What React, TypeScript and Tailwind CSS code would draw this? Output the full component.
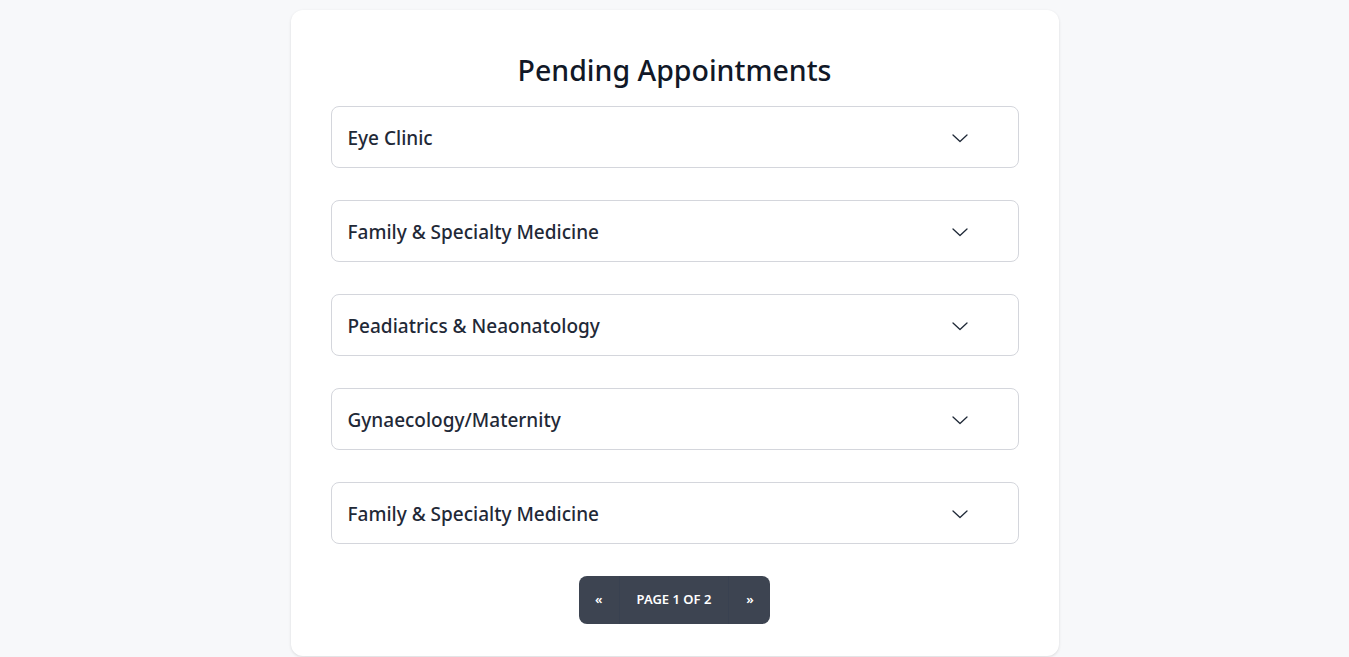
import React from 'react';

const clinics = [
  'Eye Clinic',
  'Family & Specialty Medicine',
  'Peadiatrics & Neaonatology',
  'Gynaecology/Maternity',
  'Family & Specialty Medicine',
];

function Chevron() {
  return (
    <svg width="16" height="16" viewBox="0 0 16 16" fill="none" className="text-[#1f2937]">
      <polyline points="1,5 8,11.5 15,5" stroke="currentColor" strokeWidth="1.3" strokeLinecap="round" strokeLinejoin="round" />
    </svg>
  );
}

export default function App() {
  return (
    <div className="min-h-screen bg-[#f7f8fa] py-2.5 font-['Noto_Sans',sans-serif]">
      <div className="w-[768px] mx-auto bg-white rounded-xl shadow-[0_1px_3px_rgba(0,0,0,0.12)] px-10 pt-[42px] pb-8">
        <h1 className="text-center text-[28.5px] leading-9 font-medium text-[#111827] mb-[18px]">
          Pending Appointments
        </h1>

        <div className="flex flex-col gap-8">
          {clinics.map((name, idx) => (
            <div
              key={idx}
              className="flex items-center justify-between border border-[#d4d6dc] rounded-lg pl-4 pr-[50px] pt-[17px] pb-[15px]"
            >
              <span className="text-[19px] leading-7 font-medium text-[#1f2937]">{name}</span>
              <Chevron />
            </div>
          ))}
        </div>

        <div className="flex justify-center mt-8">
          <div className="flex h-12 rounded-lg overflow-hidden bg-[#3d4451] text-white text-[13px] font-semibold">
            <button className="w-[41px] h-12 uppercase border-r border-[#394150]">«</button>
            <button className="px-[17px] h-12 uppercase">Page 1 of 2</button>
            <button className="w-[42px] h-12 uppercase border-l border-[#394150]">»</button>
          </div>
        </div>
      </div>
    </div>
  );
}
